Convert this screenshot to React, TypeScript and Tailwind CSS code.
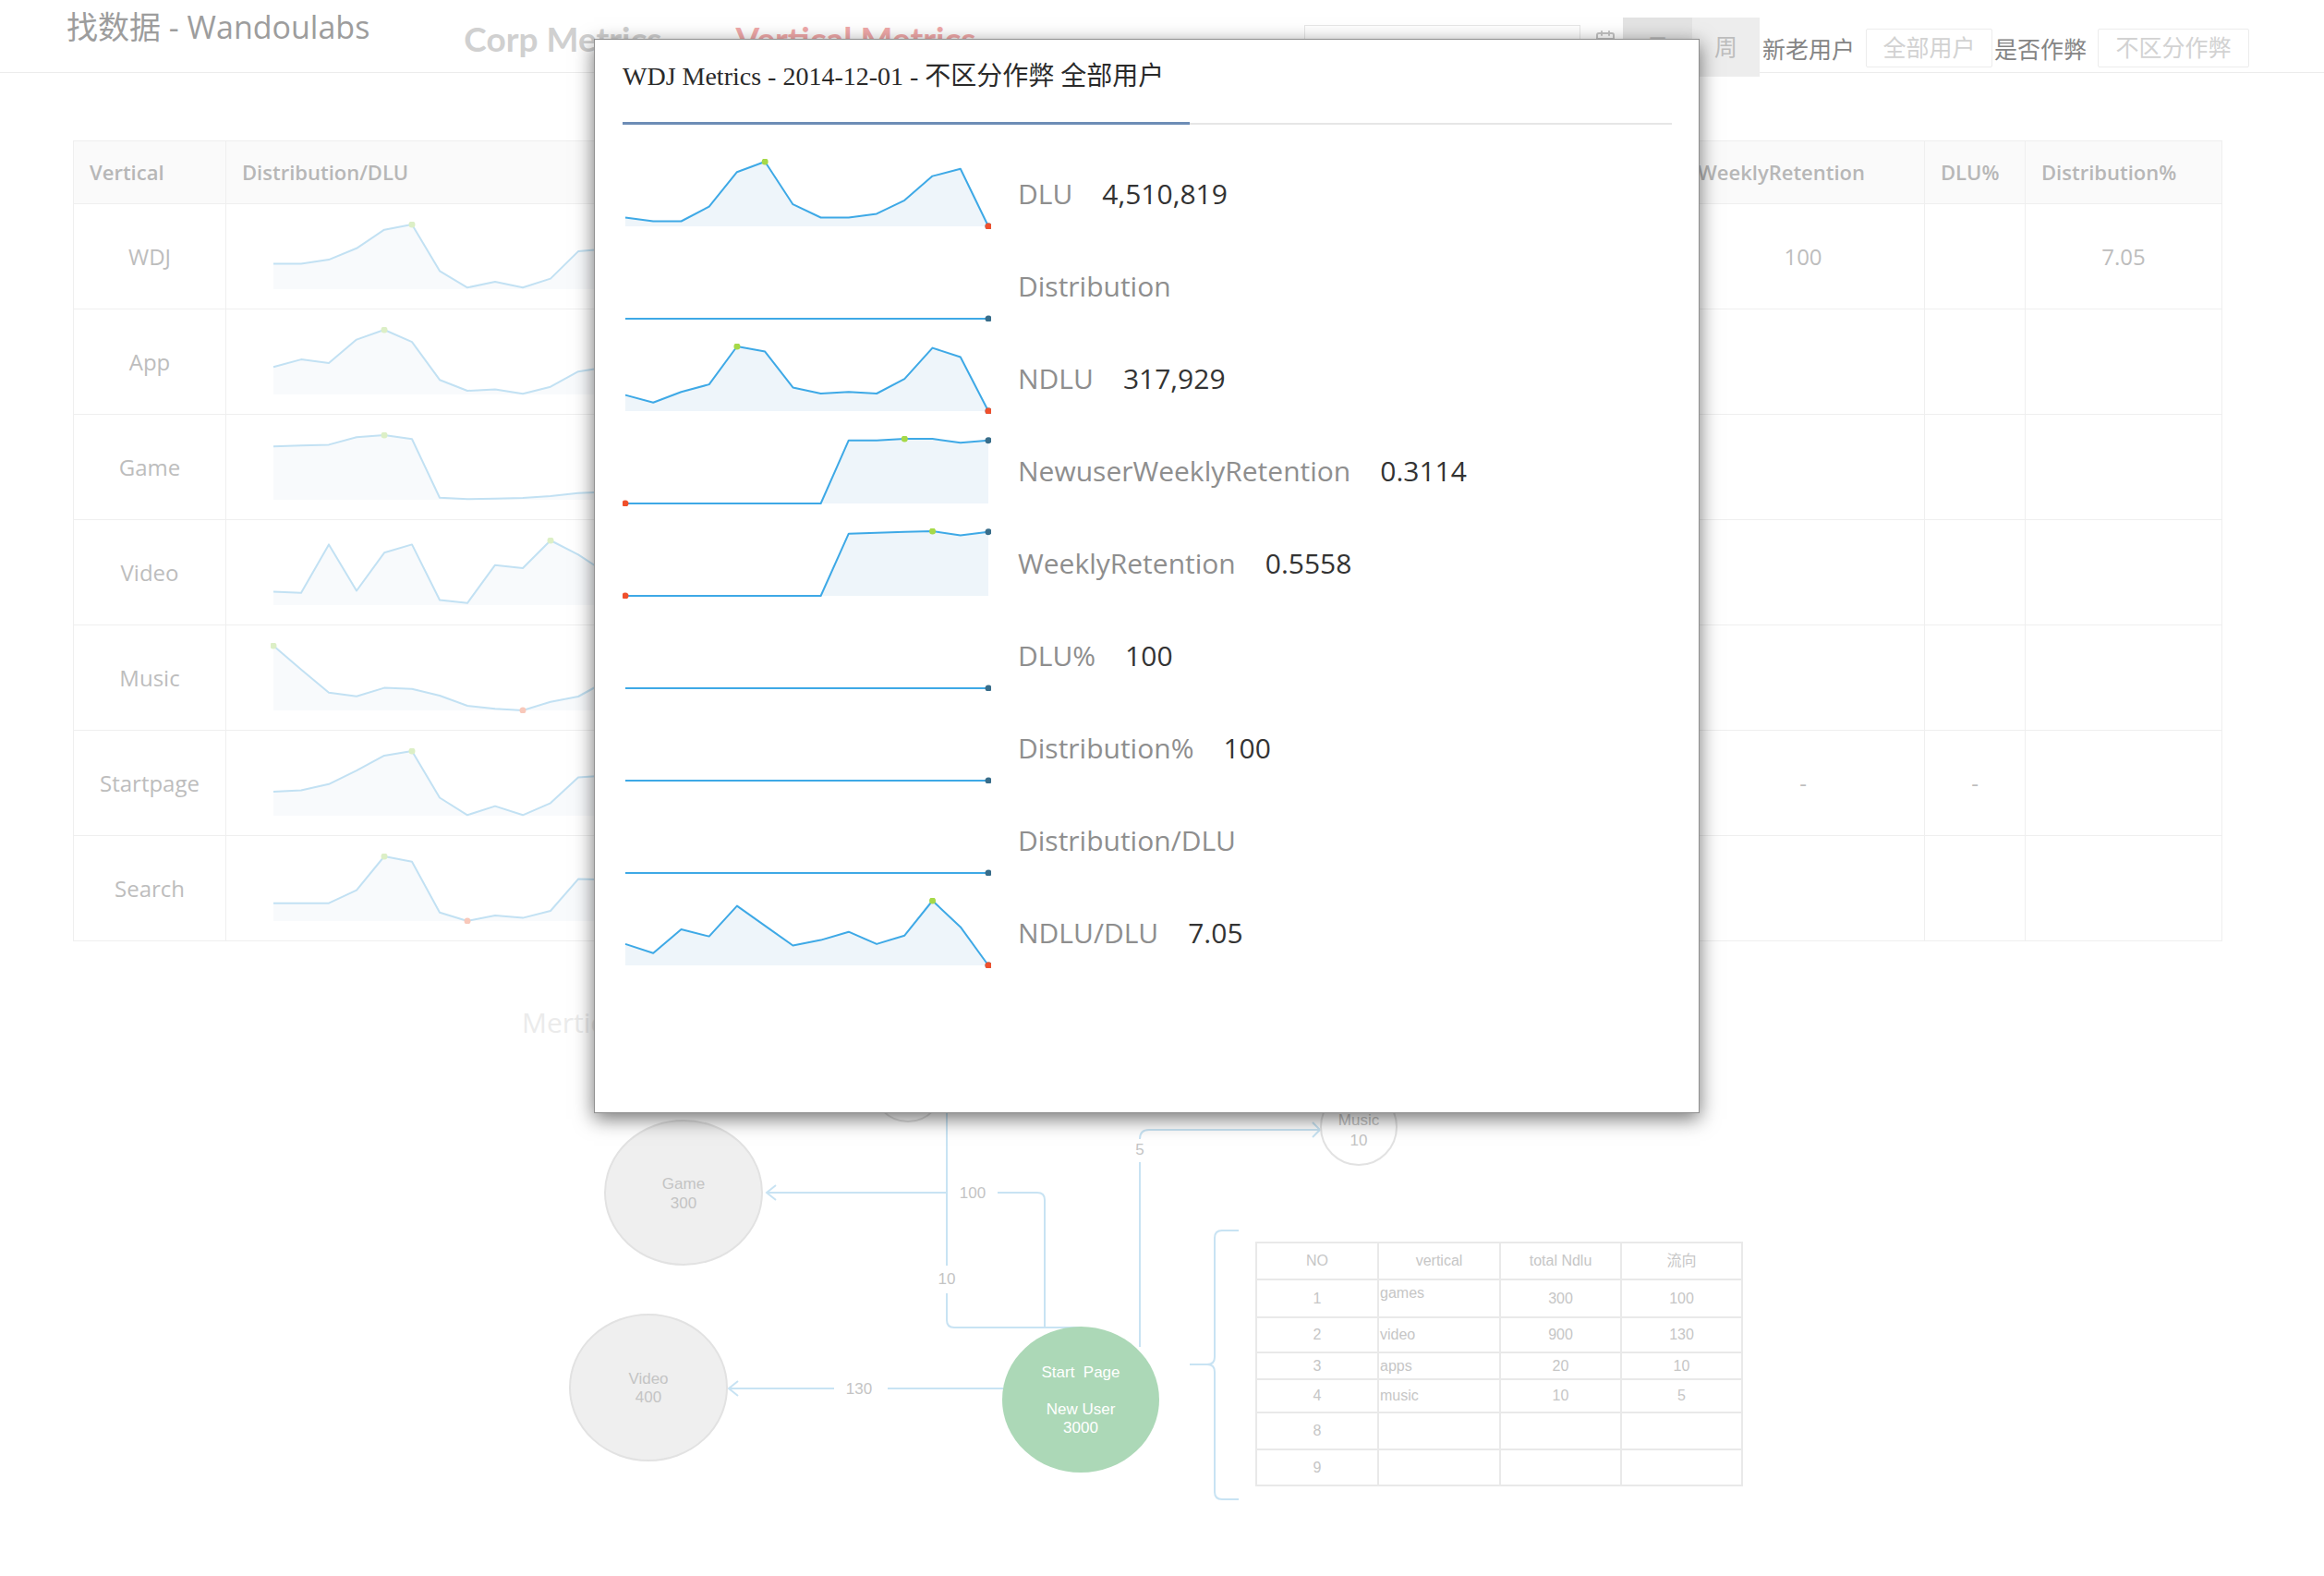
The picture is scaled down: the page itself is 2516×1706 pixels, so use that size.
import React from "react";
import { Calendar } from "lucide-react";

type SparkProps = {
  data: number[];
  width: number;
  height: number;
  pad: number;
  lineColor: string;
  fillColor: string;
  lineWidth: number;
  r: number;
  minColor: string;
  maxColor: string;
  endColor: string;
};

function Sparkline({ data, width, height, pad, lineColor, fillColor, lineWidth, r, minColor, maxColor, endColor }: SparkProps) {
  const n = data.length;
  const iw = width - pad * 2;
  const ih = height - pad * 2;
  const xs = data.map((_, i) => pad + (i * iw) / (n - 1));
  const ys = data.map((v) => pad + (1 - v) * ih);
  const line = xs.map((x, i) => `${x.toFixed(1)},${ys[i].toFixed(1)}`).join(" ");
  const bottom = pad + ih;
  const area = `${xs[0].toFixed(1)},${bottom} ${line} ${xs[n - 1].toFixed(1)},${bottom}`;
  const flat = data.every((v) => v === data[0]);
  let minI = 0;
  let maxI = 0;
  data.forEach((v, i) => {
    if (v < data[minI]) minI = i;
    if (v > data[maxI]) maxI = i;
  });
  return (
    <svg width={width} height={height} className="block shrink-0">
      {!flat && <polygon points={area} fill={fillColor} />}
      <polyline points={line} fill="none" stroke={lineColor} strokeWidth={lineWidth} strokeLinejoin="round" />
      <circle cx={xs[n - 1]} cy={ys[n - 1]} r={r} fill={endColor} />
      {!flat && <circle cx={xs[minI]} cy={ys[minI]} r={r} fill={minColor} />}
      {!flat && <circle cx={xs[maxI]} cy={ys[maxI]} r={r} fill={maxColor} />}
    </svg>
  );
}

const FLAT = [0, 0, 0, 0, 0, 0, 0, 0, 0, 0, 0, 0, 0, 0];

const modalRows: { label: string; value?: string; data: number[] }[] = [
  { label: "DLU", value: "4,510,819", data: [0.136, 0.078, 0.078, 0.306, 0.84, 1, 0.34, 0.136, 0.136, 0.194, 0.403, 0.777, 0.888, 0] },
  { label: "Distribution", data: FLAT },
  { label: "NDLU", value: "317,929", data: [0.249, 0.131, 0.296, 0.413, 1, 0.92, 0.366, 0.272, 0.296, 0.272, 0.498, 0.977, 0.836, 0] },
  { label: "NewuserWeeklyRetention", value: "0.3114", data: [0, 0, 0, 0, 0, 0, 0, 0, 0.976, 0.976, 1, 1, 0.938, 0.976] },
  { label: "WeeklyRetention", value: "0.5558", data: [0, 0, 0, 0, 0, 0, 0, 0, 0.962, 0.976, 0.99, 1, 0.934, 0.99] },
  { label: "DLU%", value: "100", data: FLAT },
  { label: "Distribution%", value: "100", data: FLAT },
  { label: "Distribution/DLU", data: FLAT },
  { label: "NDLU/DLU", value: "7.05", data: [0.33, 0.189, 0.557, 0.448, 0.92, 0.613, 0.307, 0.392, 0.519, 0.33, 0.462, 1, 0.594, 0] },
];

const tableRows: { name: string; data: number[]; wr?: string; dlup?: string; distp?: string; hidden: string[] }[] = [
  { name: "WDJ", data: [0.392, 0.392, 0.455, 0.632, 0.919, 1, 0.282, 0.024, 0.115, 0.024, 0.163, 0.584, 0.62, 0], wr: "100", distp: "7.05", hidden: ["4,510,819", "", "317,929", "0.3114"] },
  { name: "App", data: [0.425, 0.542, 0.486, 0.849, 1, 0.811, 0.226, 0.057, 0.08, 0.01, 0.118, 0.354, 0.42, 0], hidden: ["", "", "", ""] },
  { name: "Game", data: [0.824, 0.838, 0.852, 0.967, 1, 0.938, 0.033, 0.01, 0.019, 0.029, 0.057, 0.105, 0.12, 0], hidden: ["", "", "", ""] },
  { name: "Video", data: [0.206, 0.19, 0.937, 0.222, 0.81, 0.937, 0.079, 0.032, 0.619, 0.571, 1, 0.78, 0.5, 0], hidden: ["", "", "", ""] },
  { name: "Music", data: [1, 0.633, 0.276, 0.219, 0.348, 0.333, 0.229, 0.071, 0.024, 0, 0.133, 0.214, 0.45, 0.5], hidden: ["", "", "", ""] },
  { name: "Startpage", data: [0.372, 0.395, 0.488, 0.698, 0.93, 1, 0.279, 0.01, 0.149, 0.01, 0.195, 0.595, 0.62, 0], wr: "-", dlup: "-", hidden: ["-", "-", "-", "-"] },
  { name: "Search", data: [0.276, 0.276, 0.276, 0.476, 1, 0.919, 0.133, 0, 0.086, 0.048, 0.157, 0.648, 0.64, 0.5], hidden: ["", "", "", ""] },
];

function Header() {
  return (
    <header className="h-[79px] border-b border-[#ececec] flex items-start">
      <div className="ml-[72px] mt-[9px] text-[34px] leading-[40px] text-[#9d9d9d] whitespace-nowrap">找数据 - Wandoulabs</div>
      <nav className="ml-[102px] mt-[20px] flex gap-[80px] font-['Lato','Open_Sans',sans-serif] font-bold text-[37px] leading-[44px] whitespace-nowrap">
        <span className="text-[#d0d0d0]">Corp Metrics</span>
        <span className="text-[#f0a9a9]">Vertical Metrics</span>
      </nav>
      <div className="ml-auto mr-[81px] flex items-start whitespace-nowrap">
        <div className="mt-[27px] w-[299px] h-[44px] border border-[#e6e6e6] px-3 text-[22px] leading-[42px] text-[#cccccc]">2014-12-01</div>
        <Calendar className="ml-[15px] mt-[32px]" size={24} color="#c4c4c4" strokeWidth={2} />
        <div className="ml-[7px] mt-[19px] h-[64px] flex text-[25px] text-[#bdbdbd]">
          <div className="w-[75px] bg-[#e3e3e3] flex items-center justify-center">日</div>
          <div className="w-[73px] bg-[#ededed] flex items-center justify-center">周</div>
        </div>
        <div className="ml-[3px] mt-[38px] text-[25px] leading-[30px] text-[#858585]">新老用户</div>
        <div className="ml-[12px] mt-[31px] w-[137px] h-[42px] border border-[#ececec] rounded-[2px] flex items-center justify-center text-[25px] text-[#d2d2d2]">全部用户</div>
        <div className="ml-[2px] mt-[38px] text-[25px] leading-[30px] text-[#858585]">是否作弊</div>
        <div className="ml-[12px] mt-[31px] w-[164px] h-[42px] border border-[#ececec] rounded-[2px] flex items-center justify-center text-[25px] text-[#d2d2d2]">不区分作弊</div>
      </div>
    </header>
  );
}

function MetricsTable() {
  const th = "border border-[#efefef] text-left pl-[17px] font-semibold text-[22px] text-[#b7b7b7] whitespace-nowrap";
  const td = "border border-[#efefef] text-center text-[24px] text-[#bdbdbd]";
  return (
    <div className="ml-[79px] mt-[73px] w-[2326px]">
      <table className="table-fixed border-collapse w-full">
        <colgroup>
          <col className="w-[165px]" />
          <col className="w-[496px]" />
          <col className="w-[220px]" />
          <col className="w-[240px]" />
          <col className="w-[220px]" />
          <col className="w-[400px]" />
          <col className="w-[263px]" />
          <col className="w-[109px]" />
          <col className="w-[213px]" />
        </colgroup>
        <thead>
          <tr className="h-[68px] bg-[#fafafa]">
            <th className={th}>Vertical</th>
            <th className={th}>Distribution/DLU</th>
            <th className={th}>DLU</th>
            <th className={th}>Distribution</th>
            <th className={th}>NDLU</th>
            <th className={th}>NewuserWeeklyRetention</th>
            <th className={th}>WeeklyRetention</th>
            <th className={th}>DLU%</th>
            <th className={th}>Distribution%</th>
          </tr>
        </thead>
        <tbody>
          {tableRows.map((r) => (
            <tr key={r.name} className="h-[114px]">
              <td className={td}>{r.name}</td>
              <td className="border border-[#efefef] pl-[48px]">
                <Sparkline
                  data={r.data}
                  width={396}
                  height={76}
                  pad={3}
                  lineColor="#c2e1f3"
                  fillColor="#f8fafc"
                  lineWidth={2}
                  r={3.5}
                  minColor="#f8c8ba"
                  maxColor="#dcefc6"
                  endColor="#b9cbd6"
                />
              </td>
              {r.hidden.map((h, i) => (
                <td key={i} className={td}>{h}</td>
              ))}
              <td className={td}>{r.wr ?? ""}</td>
              <td className={td}>{r.dlup ?? ""}</td>
              <td className={td}>{r.distp ?? ""}</td>
            </tr>
          ))}
        </tbody>
      </table>
    </div>
  );
}

function Diagram() {
  const ln = "#c8e3f3";
  const node = "#efefef";
  const nodeStroke = "#e2e2e2";
  const txt = "#c4c4c4";
  const miniCell = "border-2 border-[#e9e9e9] text-center";
  const miniRows: { h: string; no: string; v: string; t: string; f: string; top?: boolean }[] = [
    { h: "h-[41px]", no: "1", v: "games", t: "300", f: "100", top: true },
    { h: "h-[38px]", no: "2", v: "video", t: "900", f: "130" },
    { h: "h-[29px]", no: "3", v: "apps", t: "20", f: "10" },
    { h: "h-[36px]", no: "4", v: "music", t: "10", f: "5" },
    { h: "h-[40px]", no: "8", v: "", t: "", f: "" },
    { h: "h-[39px]", no: "9", v: "", t: "", f: "" },
  ];
  return (
    <section className="relative mt-[41px] h-[646px]">
      <div className="pl-[565px] pt-[30px] text-[30px] leading-[34px] text-[#ebebeb]">Mertics Flow</div>
      <svg className="absolute left-0 top-0" width={2516} height={646} viewBox="0 1060 2516 646">
        <g fill="none" stroke={ln} strokeWidth={2}>
          <path d="M 830 1291 L 1025 1291" />
          <path d="M 840 1283 L 830 1291 L 840 1299" />
          <path d="M 1080 1291 L 1123 1291 Q 1131 1291 1131 1299 L 1131 1437" />
          <path d="M 1025 1190 L 1025 1370 M 1025 1400 L 1025 1429 Q 1025 1437 1033 1437 L 1172 1437" />
          <path d="M 789 1503 L 903 1503 M 961 1503 L 1086 1503" />
          <path d="M 799 1495 L 789 1503 L 799 1511" />
          <path d="M 1234 1458 L 1234 1258 M 1234 1233 Q 1234 1223 1244 1223 L 1429 1223" />
          <path d="M 1421 1215 L 1429 1223 L 1421 1231" />
          <path d="M 1341 1332 L 1323 1332 Q 1315 1332 1315 1340 L 1315 1469 Q 1315 1477 1307 1477 L 1288 1477 M 1307 1477 Q 1315 1477 1315 1485 L 1315 1615 Q 1315 1623 1323 1623 L 1341 1623" />
        </g>
        <circle cx={983} cy={1176} r={38} fill="#ffffff" stroke={nodeStroke} strokeWidth={2} />
        <circle cx={1471} cy={1220} r={41} fill="#ffffff" stroke={nodeStroke} strokeWidth={2} />
        <ellipse cx={740} cy={1291} rx={85} ry={78} fill={node} stroke={nodeStroke} strokeWidth={2} />
        <ellipse cx={702} cy={1502} rx={85} ry={79} fill={node} stroke={nodeStroke} strokeWidth={2} />
        <ellipse cx={1170} cy={1515} rx={85} ry={79} fill="#acd8b7" />
        <g fontFamily="Liberation Sans, Arial, sans-serif" fontSize={17} textAnchor="middle" fill={txt}>
          <text x={1471} y={1218}>Music</text>
          <text x={1471} y={1240}>10</text>
          <text x={740} y={1287}>Game</text>
          <text x={740} y={1308}>300</text>
          <text x={702} y={1498}>Video</text>
          <text x={702} y={1518}>400</text>
          <text x={1053} y={1297}>100</text>
          <text x={1025} y={1390}>10</text>
          <text x={930} y={1509}>130</text>
          <text x={1234} y={1250}>5</text>
        </g>
        <g fontFamily="Liberation Sans, Arial, sans-serif" fontSize={17} textAnchor="middle" fill="#ffffff">
          <text x={1170} y={1491} xmlSpace="preserve">Start  Page</text>
          <text x={1170} y={1531}>New User</text>
          <text x={1170} y={1551}>3000</text>
        </g>
      </svg>
      <table className="absolute left-[1359px] top-[284px] w-[526px] table-fixed border-collapse font-['Liberation_Sans',Arial,'Noto_Sans_CJK_SC',sans-serif] text-[16px] text-[#c6c6c6]">
        <colgroup>
          <col className="w-[132px]" />
          <col className="w-[132px]" />
          <col className="w-[131px]" />
          <col className="w-[131px]" />
        </colgroup>
        <tbody>
          <tr className="h-[40px]">
            <td className={miniCell}>NO</td>
            <td className={miniCell}>vertical</td>
            <td className={miniCell}>total Ndlu</td>
            <td className={miniCell}>流向</td>
          </tr>
          {miniRows.map((r) => (
            <tr key={r.no} className={r.h}>
              <td className={miniCell}>{r.no}</td>
              <td className={`border-2 border-[#e9e9e9] text-left pl-[1px] ${r.top ? "align-top pt-[2px]" : ""}`}>{r.v}</td>
              <td className={miniCell}>{r.t}</td>
              <td className={miniCell}>{r.f}</td>
            </tr>
          ))}
        </tbody>
      </table>
    </section>
  );
}

function Modal() {
  return (
    <div className="absolute left-[643px] top-[42px] w-[1197px] h-[1163px] bg-white border border-[#8f8f8f] shadow-[0_6px_20px_rgba(0,0,0,0.55)] pl-[30px] pr-[29px] pt-[23px]">
      <div className="font-['Liberation_Serif','Noto_Sans_CJK_SC',serif] text-[28px] leading-[34px] text-[#2a2a2a] whitespace-nowrap">
        WDJ Metrics - 2014-12-01 - 不区分作弊 全部用户
      </div>
      <div className="mt-[32px] flex items-center h-[3px]">
        <div className="w-[614px] h-[3px] bg-[#6d8db6]" />
        <div className="flex-1 h-[2px] bg-[#e6e6e6]" />
      </div>
      <div className="mt-[25px] flex flex-col">
        {modalRows.map((r) => (
          <div key={r.label} className="h-[100px] flex items-center">
            <Sparkline
              data={r.data}
              width={399}
              height={76}
              pad={3}
              lineColor="#3ea9e6"
              fillColor="#eef5fa"
              lineWidth={2}
              r={3.5}
              minColor="#f0502c"
              maxColor="#a6d948"
              endColor="#386d8a"
            />
            <div className="ml-[29px] flex items-baseline text-[30px] leading-[40px] whitespace-nowrap">
              <span className="text-[#8e8e8e]">{r.label}</span>
              {r.value && <span className="ml-[32px] text-[#333333]">{r.value}</span>}
            </div>
          </div>
        ))}
      </div>
    </div>
  );
}

export default function App() {
  return (
    <div className="relative w-[2516px] h-[1706px] overflow-hidden bg-white font-['Open_Sans','Noto_Sans_CJK_SC',sans-serif]">
      <Header />
      <MetricsTable />
      <Diagram />
      <Modal />
    </div>
  );
}
